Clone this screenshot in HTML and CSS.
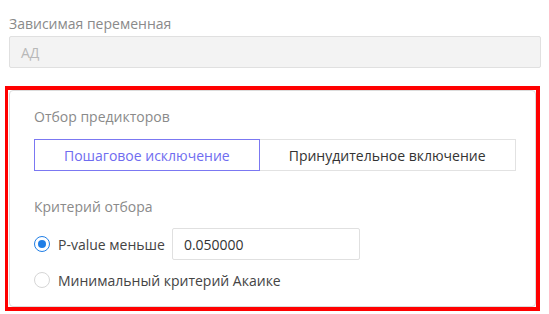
FILE: index.html
```html
<!DOCTYPE html>
<html lang="ru">
<head>
    <meta charset="UTF-8">
    <meta name="viewport" content="width=device-width, initial-scale=1.0">
    <title>Регрессия</title>
    <link rel="stylesheet" href="styles.css">
</head>
<body>

    <!-- Dependent variable -->
    <div class="field">
        <div class="field-label">Зависимая переменная</div>
        <div class="input input-disabled">АД</div>
    </div>

    <!-- Predictor selection card -->
    <div class="card">
        <div class="section-title">Отбор предикторов</div>
        <div class="segmented">
            <button class="segment segment-active">Пошаговое исключение</button>
            <button class="segment">Принудительное включение</button>
        </div>

        <div class="section-title criteria-title">Критерий отбора</div>
        <div class="radio-row">
            <span class="radio radio-checked"></span>
            <span class="radio-label">P-value меньше</span>
            <div class="input value-input">0.050000</div>
        </div>
        <div class="radio-row">
            <span class="radio"></span>
            <span class="radio-label">Минимальный критерий Акаике</span>
        </div>

        <!-- highlight frame -->
        <div class="highlight"></div>
    </div>

</body>
</html>
```

FILE: styles.css
```css
body {
    margin: 0;
    padding: 14px 8px 7px 9px;
    font-family: "Open Sans", "Noto Sans", sans-serif;
    font-size: 14px;
    color: #333;
    background: white;
}
.field-label {
    color: #8a8a8a;
    line-height: 19px;
    margin-bottom: 3px;
}
.input {
    box-sizing: border-box;
    height: 32px;
    border: 1px solid #e0e0e0;
    border-radius: 2px;
    padding: 0 11px;
    display: flex;
    align-items: center;
    color: #333;
}
.input-disabled {
    background: #f3f3f3;
    color: #b8b8b8;
}
.card {
    position: relative;
    box-sizing: border-box;
    margin-top: 22px;
    width: 527px;
    height: 217px;
    border: 1px solid #dcdcdc;
    border-radius: 4px;
    padding: 16px 10px 0 24px;
}
.section-title {
    color: #8a8a8a;
    line-height: 19px;
}
.segmented {
    display: flex;
    margin-top: 13px;
}
.segment {
    box-sizing: border-box;
    flex-shrink: 0;
    white-space: nowrap;
    height: 32px;
    padding: 0 29px;
    background: white;
    border: 1px solid #e2e2e2;
    font-family: inherit;
    font-size: 14px;
    color: #333;
    cursor: pointer;
}
.segment + .segment {
    border-left: none;
}
.segment-active {
    border-color: #7b78f2;
    color: #6f6cf0;
}
.criteria-title {
    margin-top: 26px;
}
.radio-row {
    display: flex;
    align-items: center;
    height: 36px;
}
.criteria-title + .radio-row {
    margin-top: 10px;
}
.radio {
    box-sizing: border-box;
    width: 16px;
    height: 16px;
    border-radius: 50%;
    border: 1px solid #d6d6d6;
    margin-right: 8px;
    position: relative;
}
.radio-checked {
    border-color: #1f7ee6;
}
.radio-checked::after {
    content: "";
    position: absolute;
    left: 3px;
    top: 3px;
    width: 8px;
    height: 8px;
    border-radius: 50%;
    background: #1f7ee6;
}
.radio-label {
    color: #444;
}
.value-input {
    width: 188px;
    margin-left: 7px;
}
.highlight {
    position: absolute;
    left: -5px;
    top: -5px;
    right: -5px;
    bottom: -5px;
    border: 4px solid #ff0000;
    border-left-width: 3px;
    pointer-events: none;
}
```
